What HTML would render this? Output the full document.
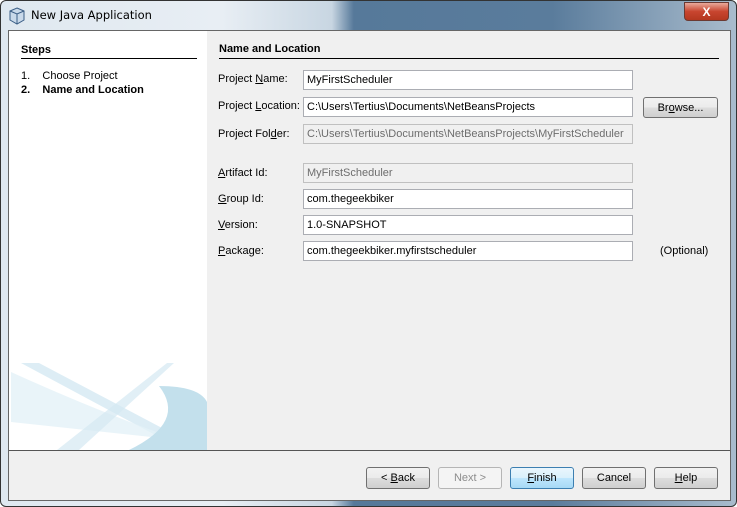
<!DOCTYPE html><html><head><style>
*{box-sizing:border-box}body{margin:0;width:737px;height:507px;overflow:hidden;font-family:"Liberation Sans",sans-serif;font-size:11px;color:#000;background:#fff}
.win{position:absolute;left:0;top:0;width:737px;height:507px;border:1px solid #333;border-radius:6px;background:linear-gradient(90deg,#dfe8f0 0%,#e8eef4 30%,#c8d6e2 45%,#56799a 48%,#5a7c9c 75%,#a9bccd 100%)}
.title{position:absolute;left:30px;top:7px;font-family:"DejaVu Sans","Liberation Sans",sans-serif;font-size:11.5px}
.close{position:absolute;left:683px;top:1px;width:45px;height:19px;border:1px solid #6b3a33;border-radius:0 0 4px 4px;background:linear-gradient(#e9a99b,#c8452f 50%,#b43820);color:#fff;text-align:center;font-weight:bold;font-size:12px;line-height:18px}
.in{position:absolute;left:7px;top:29px;width:723px;height:471px;background:#f0f0f0;border:1px solid #666}
.left{position:absolute;left:0;top:0;width:198px;height:419px;background:#fff;overflow:hidden}
.hl{position:absolute;left:0;top:419px;width:721px;height:1px;background:#555}
.abs{position:absolute}
.f{position:absolute;left:294px;width:330px;height:20px;background:#fff;border:1px solid #abadb3;padding:3px 3px;white-space:nowrap}
.dis{background:#f0f0f0;color:#6d6d6d;border-color:#c0c0c0}
.lb{position:absolute;left:209px}
.btn{position:absolute;top:436px;width:64px;height:22px;border:1px solid #707070;border-radius:3px;background:linear-gradient(#f2f2f2,#ebebeb 50%,#dddddd 51%,#cfcfcf);text-align:center;line-height:20px}
u{text-decoration:underline}
</style></head><body><div class="win">
<svg class="abs" style="left:8px;top:6px" width="16" height="18"><path d="M8 1 L15 4 V13 L8 17 L1 13 V4Z" fill="#c9d9ea" stroke="#3b5e86"/><path d="M1 4 L8 7 L15 4 M8 7 V17" fill="none" stroke="#3b5e86"/></svg>
<div class="title">New Java Application</div>
<div class="close">X</div>
<div class="in">
<div class="left">
<svg class="abs" style="left:0;top:311px" width="198" height="108"><path d="M12 21 L30 21 L170 95 L150 95Z" fill="#cfe6f1" opacity=".7"/><path d="M2 30 Q90 70 170 98 L2 80Z" fill="#e3f1f7" opacity=".8"/><path d="M158 21 L48 108 L70 108 L165 21Z" fill="#d4e8f2" opacity=".7"/><path d="M150 44 Q190 44 198 60 L198 108 L120 108 Q178 80 150 44Z" fill="#c3e0ec"/></svg>
<div class="abs" style="left:12px;top:13px;font-weight:bold">Steps</div>
<div class="abs" style="left:12px;top:27px;width:176px;height:1px;background:#000"></div>
<div class="abs" style="left:12px;top:39px">1.&nbsp;&nbsp;&nbsp;&nbsp;Choose Project</div>
<div class="abs" style="left:12px;top:53px;font-weight:bold">2.&nbsp;&nbsp;&nbsp;&nbsp;Name and Location</div>
</div>
<div class="abs" style="left:210px;top:12px;font-weight:bold">Name and Location</div>
<div class="abs" style="left:210px;top:27px;width:500px;height:1px;background:#000"></div>
<div class="lb" style="top:42px">Project <u>N</u>ame:</div><div class="f" style="top:39px">MyFirstScheduler</div>
<div class="lb" style="top:69px">Project <u>L</u>ocation:</div><div class="f" style="top:66px">C:\Users\Tertius\Documents\NetBeansProjects</div>
<div class="btn" style="left:634px;top:66px;width:75px;height:21px">Br<u>o</u>wse...</div>
<div class="lb" style="top:97px">Project Fol<u>d</u>er:</div><div class="f dis" style="top:93px">C:\Users\Tertius\Documents\NetBeansProjects\MyFirstScheduler</div>
<div class="lb" style="top:136px"><u>A</u>rtifact Id:</div><div class="f dis" style="top:132px">MyFirstScheduler</div>
<div class="lb" style="top:162px"><u>G</u>roup Id:</div><div class="f" style="top:158px">com.thegeekbiker</div>
<div class="lb" style="top:188px"><u>V</u>ersion:</div><div class="f" style="top:184px">1.0-SNAPSHOT</div>
<div class="lb" style="top:214px"><u>P</u>ackage:</div><div class="f" style="top:210px">com.thegeekbiker.myfirstscheduler</div>
<div class="abs" style="left:651px;top:214px">(Optional)</div>
<div class="hl"></div>
<div class="btn" style="left:357px">&lt; <u>B</u>ack</div>
<div class="btn" style="left:429px;color:#8d8d8d;border-color:#b5b5b5;background:#f4f4f4">Next &gt;</div>
<div class="btn" style="left:501px;border-color:#3c7fb1;background:linear-gradient(#eaf6fd,#d9f0fc 50%,#bee6fd 51%,#a7d9f5)"><u>F</u>inish</div>
<div class="btn" style="left:573px">Cancel</div>
<div class="btn" style="left:645px"><u>H</u>elp</div>
</div></div></body></html>
